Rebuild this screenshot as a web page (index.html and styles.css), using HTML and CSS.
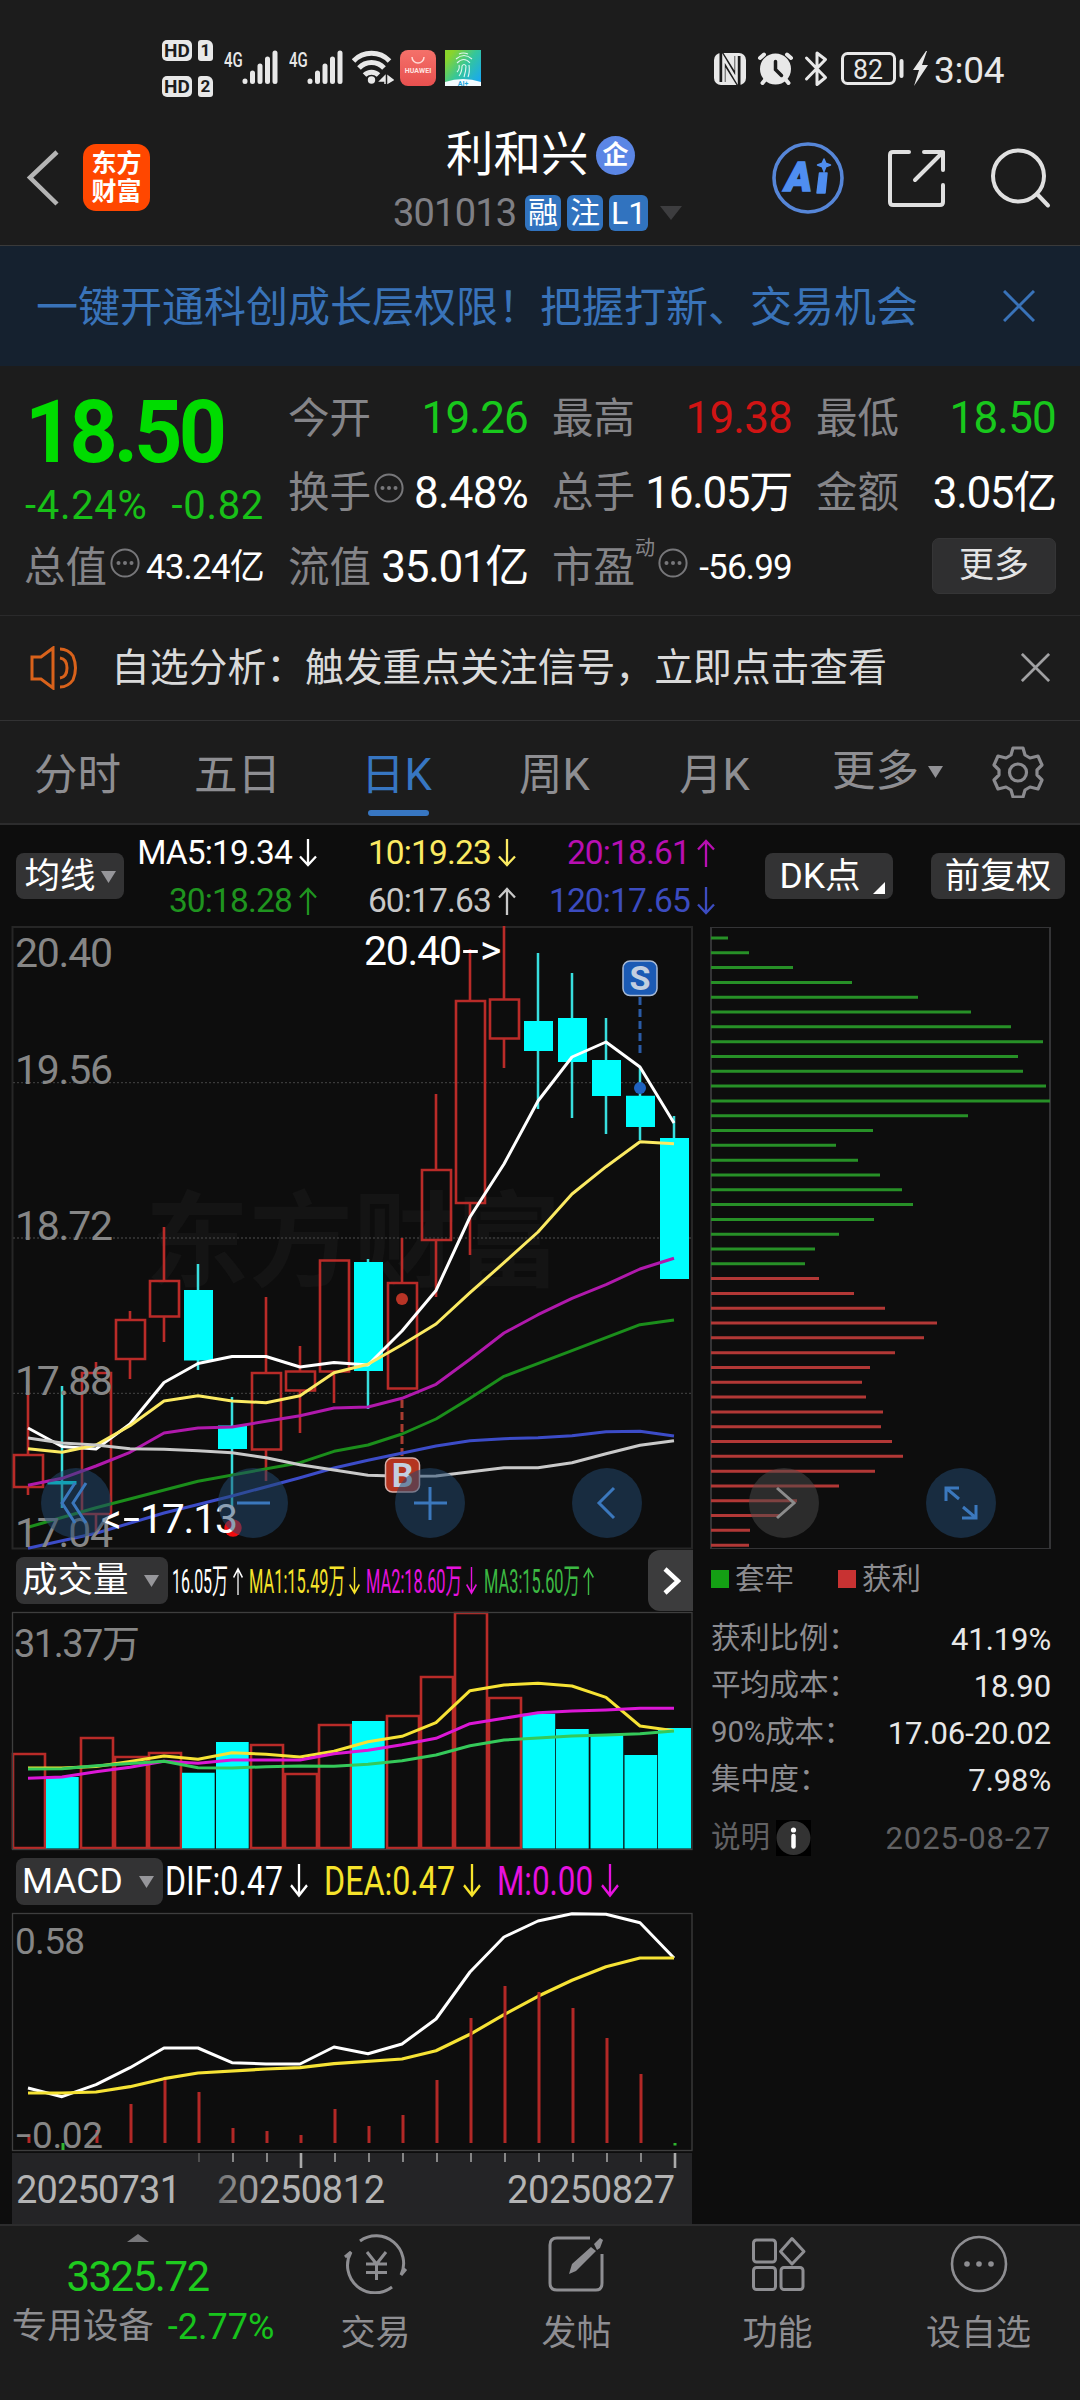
FILE: index.html
```html
<!DOCTYPE html>
<html lang="zh-CN">
<head>
<meta charset="utf-8">
<title>利和兴 301013</title>
<link rel="stylesheet" href="styles.css">
</head>
<body>
<svg class="defs" aria-hidden="true">
  <symbol id="down" viewBox="0 0 18 28" preserveAspectRatio="none"><path d="M9 0v26M1 17.500l8 8.500 8-8.500" fill="none" stroke="currentColor" stroke-width="2.300"/></symbol>
  <symbol id="up" viewBox="0 0 18 28" preserveAspectRatio="none"><path d="M9 28V2M1 10.500L9 2l8 8.500" fill="none" stroke="currentColor" stroke-width="2.300"/></symbol>
  <symbol id="dots" viewBox="0 0 30 30"><circle cx="15" cy="15" r="13.600" fill="none" stroke="currentColor" stroke-width="2"/><g fill="currentColor"><circle cx="8.500" cy="15" r="2"/><circle cx="15" cy="15" r="2"/><circle cx="21.500" cy="15" r="2"/></g></symbol>
  <symbol id="close" viewBox="0 0 32 32"><path d="M1 1l30 30M31 1L1 31" fill="none" stroke="currentColor" stroke-width="3"/></symbol>
  <symbol id="signal" viewBox="0 0 36 34"><g stroke="#e8e8e8" stroke-width="5" stroke-linecap="round"><path d="M3 31v.500M10.500 23v8.500M18 16v15.500M25.500 9v22.500M33 3v28.500"/></g></symbol>
</svg>

<header class="top">
  <div class="status">
    <div class="sims">
      <div class="sim"><b class="hd">HD</b><b class="no">1</b></div>
      <div class="sim"><b class="hd">HD</b><b class="no">2</b></div>
    </div>
    <div class="net"><span>4G</span><svg width="36" height="34"><use href="#signal"/></svg></div>
    <div class="net"><span>4G</span><svg width="36" height="34"><use href="#signal"/></svg></div>
    <svg class="wifi" width="42" height="36" viewBox="0 0 42 36">
      <g fill="none" stroke="#e8e8e8" stroke-width="5"><path d="M1.500 11a25 25 0 0 1 36 0"/><path d="M7 18a17 17 0 0 1 25 0"/><path d="M12.500 25a10 10 0 0 1 14 0"/></g>
      <circle cx="19.500" cy="30" r="3.700" fill="#e8e8e8"/>
      <path d="M28 31h5v-5zm5-5v8M36 26v8M36 26l5 4-5 3z" fill="#e8e8e8" stroke="#e8e8e8" stroke-width="1.500"/>
    </svg>
    <div class="huawei"><svg width="14" height="7" viewBox="0 0 14 7"><path d="M1 0a6 6 0 0 0 12 0" fill="none" stroke="#ffd9d5" stroke-width="1.500"/></svg><span>HUAWEI</span></div>
    <svg class="finger" width="36" height="36" viewBox="0 0 36 36">
      <defs><linearGradient id="fg" x1="0" y1="0" x2="1" y2=".8"><stop offset=".15" stop-color="#8ad42c"/><stop offset=".55" stop-color="#35c69a"/><stop offset="1" stop-color="#19a9f0"/></linearGradient></defs>
      <path d="M0 0h36v36H0z" fill="url(#fg)"/>
      <path d="M0 36v-4q18-6 36 0v4z" fill="#f4fbff"/>
      <g fill="none" stroke="#dff6ef" stroke-width="1.100"><path d="M14 4q4-2 9 0M11 9q8-7 16 0M12 13q7-7 13 0M14 26q3-4 3-10 2-3 4 0 0 5-2 11M12 22q3-3 2-7M24 15q1 7-1 12"/></g>
      <text x="18" y="35.500" text-anchor="middle" class="finger-text">AI+</text>
    </svg>
    <svg class="right-icons" width="228" height="40" viewBox="712 48 228 40">
      <rect x="714" y="53" width="32" height="32" rx="7" fill="#e8e8e8"/>
      <path d="M722.500 82V57l15 24V56" fill="none" stroke="#1c1c1c" stroke-width="6"/><path d="M723.500 82V58l13 22V56" fill="none" stroke="#e8e8e8" stroke-width="2.600"/>
      <g stroke="#e8e8e8" stroke-width="4" stroke-linecap="round"><path d="M760 58l4-3.500M791 58l-4-3.500M765 80l-2.500 3M786 80l2.500 3"/></g>
      <circle cx="775.500" cy="69" r="15.500" fill="#e8e8e8"/>
      <path d="M775.500 61.500v8l6 6" fill="none" stroke="#1c1c1c" stroke-width="3.500" stroke-linecap="round"/>
      <path d="M806.500 58l19 19.500-8.500 7V53l8.500 6.500-19 19.500" fill="none" stroke="#e8e8e8" stroke-width="3" stroke-linejoin="round" stroke-linecap="round"/>
      <rect x="842.500" y="53.500" width="52" height="30" rx="5" fill="none" stroke="#e8e8e8" stroke-width="3"/>
      <path d="M901.500 61v15" stroke="#e8e8e8" stroke-width="4" stroke-linecap="round"/>
      <path d="M926 51l-13 19h6l-5 16 14-21h-6l5-14z" fill="#e8e8e8"/>
      <text x="853" y="79" textLength="30" lengthAdjust="spacingAndGlyphs" class="battery">82</text>
    </svg>
    <span class="clock">3:04</span>
  </div>
  <div class="nav">
    <svg class="back" width="36" height="56" viewBox="0 0 36 56"><path d="M32 2L5 27.500 32 54" fill="none" stroke="#b4b4b4" stroke-width="4.500"/></svg>
    <div class="brand">东方<br>财富</div>
    <div class="title">
      <div class="name"><h1>利和兴</h1><span class="qi">企</span></div>
      <div class="code"><span class="num">301013</span><i>融</i><i>注</i><i class="l1">L1</i><svg width="22" height="14"><path d="M0 0h22L11 14z" fill="#3d3d3f"/></svg></div>
    </div>
    <svg class="actions" width="300" height="74" viewBox="771 141 300 74">
      <circle cx="808" cy="178" r="34" fill="none" stroke="#5686d8" stroke-width="3.600"/>
      <text x="785" y="191" class="ai">A</text>
      <path d="M819.500 173h7.500l-2 20h-8zM824 159l1.800 4.200 4.700 1.800-4.700 1.800-1.800 4.700-1.800-4.700-4.700-1.800 4.700-1.800z" fill="#4f8ef0" stroke="#4f8ef0" stroke-width="1.500" stroke-linejoin="round"/>
      <g fill="none" stroke="#e0e0e0" stroke-width="4" stroke-linecap="round" stroke-linejoin="round"><path d="M909 152h-16q-3 0-3 3v47q0 3 3 3h47q3 0 3-3v-17M924 152h19v18M943 152l-28 28"/><circle cx="1018.500" cy="176" r="25.500"/><path d="M1037 194l11 11.500"/></g>
    </svg>
  </div>
</header>

<section class="banner"><span>一键开通科创成长层权限！把握打新、交易机会</span><svg width="32" height="32"><use href="#close"/></svg></section>

<section class="quote">
  <div class="price">
    <strong>18.50</strong>
    <div class="change"><span>-4.24%</span><span>-0.82</span></div>
  </div>
  <div class="cell"><label>今开</label><span class="g">19.26</span></div>
  <div class="cell"><label>最高</label><span class="r">19.38</span></div>
  <div class="cell"><label>最低</label><span class="g">18.50</span></div>
  <div class="cell"><label>换手</label><svg class="info" width="30" height="30"><use href="#dots"/></svg><span>8.48%</span></div>
  <div class="cell"><label>总手</label><span class="wide">16.05万</span></div>
  <div class="cell"><label>金额</label><span class="wide">3.05亿</span></div>
  <div class="cell"><label>总值</label><svg class="info" width="30" height="30"><use href="#dots"/></svg><span class="small">43.24亿</span></div>
  <div class="cell"><label>流值</label><span class="wide">35.01亿</span></div>
  <div class="cell"><label>市盈</label><em>动</em><svg class="info" width="30" height="30"><use href="#dots"/></svg><span class="small">-56.99</span></div>
  <div class="cell end"><button>更多</button></div>
</section>

<section class="notice">
  <svg width="50" height="44" viewBox="0 0 50 44"><g fill="none" stroke="#d9621b" stroke-width="3"><path d="M2 11h9L23 2v40L11 33H2z"/><path d="M30 3q8 0 13 7 5 12 0 24-5 7-13 7M30 12q7 1 7 10t-7 10"/></g></svg>
  <span>自选分析：触发重点关注信号，立即点击查看</span>
  <svg class="x" width="29" height="29"><use href="#close"/></svg>
</section>

<nav class="tabs">
  <a>分时</a><a>五日</a><a class="on">日K</a><a>周K</a><a>月K</a>
  <a class="more">更多<svg width="15" height="12"><path d="M0 0h15L7.500 12z" fill="#929296"/></svg></a>
  <svg class="gear" width="52" height="52" viewBox="0 0 52 52"><g fill="none" stroke="#8b8b8f" stroke-width="3.200" stroke-linejoin="round"><path d="M21 2h10l2 7 5 3 8-2 4 9-5 5v5l5 5-4 9-8-2-5 3-2 7H21l-2-7-5-3-8 2-4-9 5-5v-5l-5-5 4-9 8 2 5-3z"/><circle cx="26" cy="26.500" r="8.500"/></g></svg>
</nav>

<main class="chart">
  <div class="tools">
    <button class="ma">均线<svg width="15" height="12"><path d="M0 0h15L7.500 12z" fill="#96969a"/></svg></button>
    <div class="averages">
      <span class="white">MA5:19.34<svg><use href="#down"/></svg></span><span class="yellow">10:19.23<svg><use href="#down"/></svg></span><span class="purple">20:18.61<svg><use href="#up"/></svg></span>
      <span class="green">30:18.28<svg><use href="#up"/></svg></span><span class="grey">60:17.63<svg><use href="#up"/></svg></span><span class="blue">120:17.65<svg><use href="#down"/></svg></span>
    </div>
    <button class="dk">DK点<svg width="12" height="12"><path d="M12 0v12H0z" fill="#fff"/></svg></button>
    <button class="fq">前复权</button>
  </div>

  <div class="panes">
    <div class="left">
      <svg width="700" height="624" viewBox="0 926 700 624">
        <text x="145" y="1279" class="watermark" textLength="416">东方财富</text>
        <rect x="12.500" y="927" width="679.500" height="621.500" fill="none" stroke="#262626" stroke-width="2"/>
        <path d="M13 1082.700h679M13 1238h679M13 1393.400h679" stroke="#3a3a3a" stroke-width="1.300" stroke-dasharray="2 2"/>
        <g fill="none" stroke="#b92b28" stroke-width="2.600">
          <path d="M28 1385v69M28 1487v8M96 1362v10M96 1514v19M130 1311v8M130 1359v20M164 1227v53M164 1316v26M266 1297v75M266 1449v32M300 1346v25M300 1390v43M334 1372v31M402 1238v44M436 1094v75M436 1240v57M470 949v52M470 1203v52M504 926v73M504 1038v30"/>
          <path d="M14 1455h29v32H14zM82 1373h29v141H82zM116 1320h29v39h-29zM150 1281h29v35.500h-29zM252 1373h29v76.500h-29zM286 1371.500h29v19h-29zM320 1260.500h29v111h-29zM388 1283h29v105.500h-29zM422 1170h29v70h-29zM456 1001h29v202h-29zM490 999.500h29v39h-29z"/>
        </g>
        <path d="M62 1386v122M198 1264v106M232 1397v113M368 1259v150M538 953v156M572 973v145M606 1018v116M640 1067v73M674 1116v30" stroke="#38dede" stroke-width="2.500"/>
        <path d="M47.500 1481h29v3.500h-29zM184 1290h29v70.500h-29zM218 1425.500h29V1449h-29zM354 1262h29v109h-29zM524 1021h29v30h-29zM558 1018h29v44h-29zM592 1060h29v36h-29zM626 1095.700h29v31.300h-29zM660 1138h29v141h-29z" fill="#00fefe"/>
        <path d="M640 997v56" stroke="#2a5ba5" stroke-width="3" stroke-dasharray="8 4"/>
        <path d="M402 1400v58" stroke="#a83c30" stroke-width="3" stroke-dasharray="8 4"/>
        <g fill="none" stroke-width="3" stroke-linejoin="round">
          <polyline stroke="#fff" points="28,1428 62,1446.500 96,1449 130,1424 164,1382.500 198,1363.500 232,1356.500 266,1356.500 300,1367 334,1362.500 368,1365 402,1331 436,1290.500 470,1217 504,1164 538,1101 572,1057 606,1042 640,1067 674,1123"/>
          <polyline stroke="#fbea62" points="28,1448.700 62,1452.300 96,1445 130,1425.700 164,1401 198,1395.700 232,1401 266,1402.700 300,1395.700 334,1372.700 368,1364.300 402,1344.700 436,1324 470,1292.700 504,1262.700 538,1232 572,1194 606,1166.700 640,1141.700 674,1143.700"/>
          <polyline stroke="#b019ac" points="28,1485.300 62,1478.300 96,1466 130,1452.300 164,1433 198,1428 232,1427 266,1421.300 300,1415.700 334,1408 368,1407 402,1398.300 436,1384.300 470,1359.300 504,1333 538,1314.700 572,1298.300 606,1284.700 640,1269 674,1258.300"/>
          <polyline stroke="#1b8e1b" points="28,1527.300 96,1507.700 198,1481.300 300,1462.700 334,1451.300 368,1445 402,1434 436,1419 470,1398.300 504,1376.300 572,1350.700 640,1324.700 674,1320"/>
          <polyline stroke="#3c4cc8" points="28,1548.300 96,1533.300 164,1513 232,1496 300,1477.700 334,1468 368,1460.300 436,1446 470,1440.700 504,1438.700 538,1437.700 572,1435.700 606,1431.700 640,1431.300 674,1436"/>
          <polyline stroke="#c9c9c9" points="28,1438 62,1443 96,1445 130,1448.700 164,1449.300 198,1450.700 232,1452.700 266,1457.700 300,1464.700 334,1470 368,1475.300 402,1476.300 436,1476 504,1467.700 538,1467.700 572,1462.700 606,1453.700 640,1445.300 674,1440.700"/>
        </g>
        <circle cx="640" cy="1088" r="6" fill="#1f62c0"/>
        <circle cx="402" cy="1299" r="6" fill="#b83426"/>
        <circle cx="233" cy="1528" r="8.700" fill="#f00c10"/>
        <rect x="623" y="961" width="34" height="34.500" rx="7" fill="#1b5ab4" stroke="#a9bbd6" stroke-width="1.500"/>
        <text x="640" y="990" class="mark">S</text>
        <rect x="385.500" y="1458" width="34" height="34" rx="7" fill="#b4341f" stroke="#d7b0ab" stroke-width="1.500"/>
        <text x="402.500" y="1487" class="mark">B</text>
        <g class="axis">
          <text x="15" y="966.500" textLength="98">20.40</text><text x="15" y="1084" textLength="98">19.56</text><text x="15" y="1239.500" textLength="98">18.72</text><text x="15" y="1394.500" textLength="98">17.88</text><text x="15" y="1546.500" textLength="98">17.04</text>
        </g>
        <g class="peak"><text x="364" y="964.500" textLength="98">20.40</text><text x="462" y="964" textLength="17" lengthAdjust="spacingAndGlyphs">-</text><text x="480" y="964">&gt;</text><text x="101" y="1532.500">&lt;</text><text x="123" y="1532" textLength="17" lengthAdjust="spacingAndGlyphs">-</text><text x="140" y="1532.500" textLength="98">17.13</text></g>
      </svg>

      <div class="sub">
        <button class="vol">成交量<svg width="15" height="12"><path d="M0 0h15L7.500 12z" fill="#96969a"/></svg></button>
        <svg width="470" height="62" viewBox="170 1550 470 62" class="vol-values">
          <g class="white"><text x="172" y="1593" textLength="56" lengthAdjust="spacingAndGlyphs">16.05万</text><use href="#up" x="233" y="1567" width="10" height="28"/></g>
          <g class="vyellow"><text x="249" y="1593" textLength="96" lengthAdjust="spacingAndGlyphs">MA1:15.49万</text><use href="#down" x="349" y="1567" width="11" height="28"/></g>
          <g class="vpink"><text x="366" y="1593" textLength="96" lengthAdjust="spacingAndGlyphs">MA2:18.60万</text><use href="#down" x="466" y="1567" width="11" height="28"/></g>
          <g class="vgreen"><text x="484" y="1593" textLength="96" lengthAdjust="spacingAndGlyphs">MA3:15.60万</text><use href="#up" x="583" y="1567" width="11" height="28"/></g>
        </svg>
        <div class="next"><svg width="18" height="28" viewBox="0 0 18 28"><path d="M2 2l13 12L2 26" fill="none" stroke="#fff" stroke-width="4.500"/></svg></div>
      </div>

      <svg width="700" height="240" viewBox="0 1611 700 240">
        <g fill="none" stroke="#b92b28" stroke-width="2.600"><path d="M13 1754h32v94H13zM81 1738h32v110H81zM115 1757h32v91h-32zM149 1753h32v95h-32zM251 1745h32v103h-32zM285 1774h32v74h-32zM319 1725h32v123h-32zM387 1716h32v132h-32zM421 1677h32v171h-32zM455 1613h32v235h-32zM489 1698h32v150h-32z"/></g>
        <path d="M46 1777h32.700v71.500H46zM182 1772.700h32.700v75.800H182zM216 1742h32.700v106.500H216zM352 1721h32.700v127.500H352zM522.500 1713.700h32.700v134.800h-32.700zM556 1729h32.700v119.500H556zM590.500 1735h32.700v113.500h-32.700zM624.500 1755h32.700v93.500h-32.700zM658 1728h33v120.500h-33z" fill="#00fefe"/>
        <rect x="12.500" y="1612.500" width="679.500" height="237" fill="none" stroke="#3e3e3e" stroke-width="1.300"/>
        <g fill="none" stroke-width="3" stroke-linejoin="round">
          <polyline stroke="#f6e335" points="28,1768 62,1768 96,1766.500 130,1761.500 164,1756 198,1759.300 232,1752.700 266,1754.300 300,1757 334,1751.300 368,1741.700 402,1736.300 436,1722.700 470,1690.700 504,1685 538,1683.300 572,1686 606,1697.300 640,1726 674,1730.700"/>
          <polyline stroke="#dc17d6" points="28,1778.300 62,1777 96,1771.700 130,1767.300 164,1761.300 198,1763.300 232,1760 300,1760 334,1753.700 368,1750.300 402,1744.700 436,1738.300 470,1723.700 504,1718.300 538,1712.700 572,1711 606,1710 640,1708.300 674,1708.300"/>
          <polyline stroke="#35c95a" points="28,1769 62,1768.700 96,1765.700 164,1761.300 198,1767.700 232,1768 266,1766.700 300,1766 334,1766.300 368,1764.300 402,1760.700 436,1755 470,1745.700 504,1740 538,1738 572,1736 606,1735 640,1733.700 674,1731"/>
        </g>
        <text x="14" y="1656.500" class="axis s38" textLength="126">31.37万</text>
      </svg>

      <div class="sub macd">
        <button class="vol">MACD<svg width="15" height="12"><path d="M0 0h15L7.500 12z" fill="#96969a"/></svg></button>
        <svg width="470" height="62" viewBox="165 1851 470 62" class="macd-values">
          <g class="white"><text x="165" y="1895" textLength="118" lengthAdjust="spacingAndGlyphs">DIF:0.47</text><use href="#down" x="290" y="1864" width="18" height="34"/></g>
          <g class="vyellow"><text x="324" y="1895" textLength="131" lengthAdjust="spacingAndGlyphs">DEA:0.47</text><use href="#down" x="463" y="1864" width="18" height="34"/></g>
          <g class="vpink"><text x="497" y="1895" textLength="96" lengthAdjust="spacingAndGlyphs">M:0.00</text><use href="#down" x="601" y="1864" width="18" height="34"/></g>
        </svg>
      </div>

      <svg width="700" height="312" viewBox="0 1912 700 312">
        <defs>
          <linearGradient id="shade" gradientUnits="userSpaceOnUse" x1="185" y1="0" x2="270" y2="0"><stop offset="0" stop-color="#242426" stop-opacity=".75"/><stop offset="1" stop-color="#242426" stop-opacity="0"/></linearGradient>
        </defs>
        <rect x="12.500" y="1913.500" width="679.500" height="237" fill="none" stroke="#3e3e3e" stroke-width="1.300"/>
        <polyline fill="none" stroke="#fff" stroke-width="3" stroke-linejoin="round" points="28,2088 62,2096.700 96,2084.700 130,2067.700 164,2048 198,2048 232,2062.700 266,2064 300,2064 334,2047 368,2053.700 402,2044 436,2019 470,1972 504,1937 538,1921 572,1913.800 606,1914.300 640,1922.700 674,1958"/>
        <polyline fill="none" stroke="#f6e335" stroke-width="3.200" stroke-linejoin="round" points="28,2093 62,2093 96,2092 130,2086.700 164,2078.700 198,2073 266,2069 300,2067.700 334,2063.700 402,2059 436,2050.700 470,2034.300 504,2014.700 538,1996.300 572,1980.300 606,1966.700 640,1958 674,1958"/>
        <path d="M29 2143v-9M97 2143v-13M131 2143v-39M165 2143v-63M199 2143v-51M233 2143v-15M267 2143v-12M301 2143v-8M335 2143v-34M369 2143v-17M403 2143v-28M437 2143v-63M471 2143v-125M505 2143v-157M539 2143v-151M573 2143v-135M607 2143v-105M641 2143v-69" stroke="#b22826" stroke-width="3"/>
        <path d="M63 2143v7M675 2143v2.500" stroke="#2fb52f" stroke-width="3"/>
        <g class="axis s37"><text x="15" y="1953.500" textLength="70">0.58</text><text x="16" y="2147" textLength="15" lengthAdjust="spacingAndGlyphs">-</text><text x="32" y="2147.500" textLength="71">0.02</text></g>
        <path d="M12 2153h680v71H12z" fill="#242426"/>
        <path d="M199 2153v9" stroke="#555" stroke-width="1.800"/>
        <path d="M233 2153v9M267 2153v9M335 2153v9M369 2153v9M403 2153v9M437 2153v9M471 2153v9M505 2153v9M539 2153v9M573 2153v9M607 2153v9M641 2153v9" stroke="#929292" stroke-width="1.800"/>
        <path d="M301 2153v15M675 2153v15" stroke="#aaa" stroke-width="2.600"/>
        <g class="dates"><text x="217" y="2202.500" textLength="168">20250812</text><path d="M185 2170h85v45H185z" fill="url(#shade)"/><text x="16" y="2202.500" textLength="165">20250731</text><text x="507" y="2202.500" textLength="168">20250827</text></g>
      </svg>
    </div>

    <aside class="right">
      <svg width="342" height="624" viewBox="710 926 342 624">
        <path d="M710 927.500h341M710 1548.500h341" stroke="#343436" stroke-width="1.200"/>
        <path d="M711 927v622M1050 927v622" stroke="#343436" stroke-width="2"/>
        <path stroke="#279027" stroke-width="3" d="M711 938h17m-17 14.810h38m-38 14.810h82m-82 14.810h141m-141 14.810h207m-207 14.810h260m-260 14.810h300m-300 14.810h332m-332 14.810h307m-307 14.810h312m-312 14.810h335m-335 14.810h339m-339 14.810h257m-257 14.810h162m-162 14.810h125m-125 14.810h147m-147 14.810h169m-169 14.810h191m-191 14.810h202m-202 14.810h163m-163 14.810h128m-128 14.810h104m-104 14.810h94"/>
        <path stroke="#b23836" stroke-width="3" d="M711 1278.600h108m-108 14.810h143m-143 14.810h174m-174 14.810h226m-226 14.810h213m-213 14.810h184m-184 14.810h159m-159 14.810h151m-151 14.810h155m-155 14.810h172m-172 14.810h170m-170 14.810h181m-181 14.810h192m-192 14.810h164m-164 14.810h128m-128 14.810h86m-86 14.810h69m-69 14.810h39m-39 14.810h38"/>
      </svg>
      <div class="legend"><i class="sq-green"></i><span>套牢</span><i class="sq-red"></i><span>获利</span></div>
      <dl>
        <div><dt>获利比例：</dt><dd>41.19%</dd></div>
        <div><dt>平均成本：</dt><dd>18.90</dd></div>
        <div><dt>90%成本：</dt><dd>17.06-20.02</dd></div>
        <div><dt>集中度：</dt><dd>7.98%</dd></div>
      </dl>
      <div class="explain"><span>说明</span><svg width="35" height="36" viewBox="0 0 35 36"><path d="M0 0h35v36H0z" fill="#000"/><circle cx="17.500" cy="18" r="17" fill="#333"/><circle cx="17.500" cy="10" r="2.600" fill="#fff"/><path d="M17.500 16v10.500" stroke="#fff" stroke-width="4.500" stroke-linecap="round"/></svg><time>2025-08-27</time></div>
    </aside>

    <div class="controls">
      <svg viewBox="-35 -35 70 70"><path d="M-1-20l-13 20 13 20M10-20L-3 0l13 20"/></svg>
      <svg viewBox="-35 -35 70 70"><path d="M-16 0h33"/></svg>
      <svg viewBox="-35 -35 70 70"><path d="M-16 0h33M0-16v33"/></svg>
      <svg viewBox="-35 -35 70 70"><path d="M7-15L-8 0 7 15"/></svg>
      <svg class="off" viewBox="-35 -35 70 70"><path d="M-7-15L10 0-7 15"/></svg>
      <svg viewBox="-35 -35 70 70"><path d="M-2-15h-13v13M-15-15l13 11M1 15h14V2M15 15L2 4"/></svg>
    </div>
  </div>
</main>

<footer>
  <div class="index">
    <svg width="22" height="8"><path d="M0 8h22L11 0z" fill="#77777a"/></svg>
    <strong>3325.72</strong>
    <div><span>专用设备</span><b>-2.77%</b></div>
  </div>
  <div class="item">
    <svg width="66" height="60" viewBox="0 0 66 60"><g fill="none" stroke="#8e8e92" stroke-width="3"><path d="M17 7A27.500 27.500 0 0 1 58 41l5-6M49 53A27.500 27.500 0 0 1 8 18l-6 5"/><path d="M24 18l9.500 12L43 18M33.500 30v16M23 30h21M23 38.500h21"/></g></svg>
    <span>交易</span>
  </div>
  <div class="item">
    <svg width="66" height="60" viewBox="0 0 66 60"><path d="M46 4H13q-7 0-7 7v38q0 7 7 7h39q6 0 6-7V20" fill="none" stroke="#8e8e92" stroke-width="3"/><path d="M25 40l3-10L47 13l5 4-20 20zM50 10l6-6 3 2-3 8-3 2z" fill="#8e8e92"/></svg>
    <span>发帖</span>
  </div>
  <div class="item">
    <svg width="66" height="60" viewBox="0 0 66 60"><g fill="none" stroke="#8e8e92" stroke-width="3"><rect x="8.500" y="6" width="22" height="22" rx="3"/><rect x="8.500" y="33.500" width="22" height="22" rx="3"/><rect x="36" y="33.500" width="22" height="22" rx="3"/><path d="M47 4.500L59 17.500 47 30 35.500 17.500z" stroke-linejoin="round"/></g></svg>
    <span>功能</span>
  </div>
  <div class="item">
    <svg width="66" height="60" viewBox="0 0 66 60"><circle cx="33" cy="30" r="27" fill="none" stroke="#8e8e92" stroke-width="2.600"/><g fill="#8e8e92"><circle cx="21" cy="30" r="2.800"/><circle cx="33" cy="30" r="2.800"/><circle cx="45" cy="30" r="2.800"/></g></svg>
    <span>设自选</span>
  </div>
</footer>
</body>
</html>
```
FILE: styles.css
```css
* { box-sizing: border-box; margin: 0; padding: 0; }
body {
  width: 1080px;
  height: 2400px;
  overflow: hidden;
  background: #1c1c1c;
  color: #fff;
  font-family: Roboto, "Noto Sans CJK SC", sans-serif;
  line-height: 1;
}
svg { display: block; flex: none; }
.defs { width: 0; height: 0; overflow: hidden; }
button { border: 0; font: inherit; color: inherit; background: #333334; }
i, em { font-style: normal; }
span, label, a, b, strong, button { white-space: nowrap; }

/* header */
.top { height: 246px; border-bottom: 1px solid #3a3a3a; }
.status { height: 132px; display: flex; align-items: flex-start; padding-left: 162px; color: #e8e8e8; }
.sims { display: flex; flex-direction: column; gap: 15px; margin-top: 40px; width: 62px; }
.sim { display: flex; gap: 6px; height: 21px; }
.sim b { background: #e8e8e8; color: #1c1c1c; text-align: center; line-height: 21px; }
.hd { width: 30px; border-radius: 5px; font-size: 19px; }
.no { width: 15px; border-radius: 3px 6px 3px 3px; font-size: 17px; }
.net { display: flex; width: 65px; margin-top: 50px; }
.net span { width: 18px; font-size: 20px; font-weight: 500; transform: scaleX(.75); transform-origin: left; }
.wifi { margin: 50px 0 0 -2px; }
.huawei { width: 36px; height: 36px; margin: 50px 0 0 6px; border-radius: 8px; background: linear-gradient(#f4716a, #e8504f); display: flex; flex-direction: column; align-items: center; padding-top: 7px; }
.huawei span { font-size: 7px; font-weight: 700; margin-top: 4px; color: #ffe4e0; letter-spacing: .1px; }
.finger { margin: 50px 0 0 9px; }
.finger-text { font-size: 7px; font-weight: 700; fill: #1ea5dc; }
.right-icons { margin: 48px 0 0 231px; }
.battery { font-size: 28px; fill: #e8e8e8; }
.clock { font-size: 37px; margin: 52px 0 0 -6px; letter-spacing: -.3px; }

.nav { height: 113px; display: flex; }
.back { margin: 18px 0 0 25px; }
.brand { width: 67px; height: 67px; margin: 12px 0 0 22px; border-radius: 13px; background: #ff4700; font-size: 25px; font-weight: 700; line-height: 28px; text-align: center; padding-top: 6px; }
.title { width: 440px; margin-left: 243px; }
.name { display: flex; align-items: center; height: 47px; padding-left: 53px; }
h1 { font-size: 47.500px; font-weight: 400; width: 146px; white-space: nowrap; }
.qi { width: 39px; height: 39px; margin-left: 4px; border-radius: 50%; background: #5b86e5; font-size: 26px; font-weight: 700; line-height: 38px; text-align: center; }
.code { display: flex; align-items: center; gap: 6px; height: 36px; margin-top: 16px; }
.code .num { font-size: 38px; color: #7f7f84; letter-spacing: -.8px; width: 126px; }
.code i { width: 36px; height: 36px; border-radius: 6px; background: #3173bf; font-size: 30px; line-height: 36px; text-align: center; }
.code i.l1 { width: 39px; font-size: 32px; }
.code svg { margin-left: 6px; }
.actions { margin: 9px 0 0 -62px; }
.ai { font-size: 41px; font-weight: 900; font-style: italic; fill: #4f8ef0; stroke: #4f8ef0; stroke-width: 1.5; }

.banner { height: 120px; background: #15212f; color: #3973b9; display: flex; align-items: center; justify-content: space-between; padding: 0 45px 0 36px; font-size: 42px; }
.banner span { padding-top: 4px; }

/* quote */
.quote { height: 250px; padding: 14px 24px 0 25px; display: grid; grid-template-columns: 239px 239px 239px 239px; grid-template-rows: 74.500px 74.500px 74.500px; column-gap: 25px; border-bottom: 1px solid #2a2a2b; }
.price { grid-row: span 2; color: #00dc00; }
.price strong { display: block; font-size: 88px; font-weight: 700; letter-spacing: -4px; margin: 8px 0 0 0; transform: scaleX(.955); transform-origin: left; }
.change { display: flex; justify-content: space-between; font-size: 40px; color: #18c018; margin-top: 10px; letter-spacing: .7px; }
.cell { display: flex; align-items: center; font-size: 44px; height: 75px; padding-top: 1px; }
.cell label { font-size: 41.500px; color: #858589; margin-left: -1px; padding-top: 1px; }
.cell span { margin-left: auto; letter-spacing: -.8px; }
.cell .wide { letter-spacing: -1.3px; }
.cell .g { color: #18c81c; }
.cell .r { color: #d01414; }
.cell .small { font-size: 35px; }
.info { color: #77777a; margin: -9px 0 0 3px; }
.cell em { font-size: 20px; color: #858589; margin-top: -38px; }
.end { justify-content: flex-end; }
.end button { width: 124px; height: 56px; border-radius: 7px; font-size: 35px; color: #e4e4e4; background: #2f2f30; border: 1px solid #353536; margin-top: -3px; }

.notice { height: 105px; display: flex; align-items: center; padding: 0 30px; font-size: 38.800px; color: #dadada; border-bottom: 1px solid #323233; }
.notice span { margin-left: 31px; padding-top: 1px; }
.notice .x { margin-left: auto; color: #a0a0a2; margin-top: -2px; }

.tabs { height: 104px; display: flex; align-items: center; padding-left: 34px; color: #8e8e92; font-size: 43.500px; border-bottom: 2px solid #2c2c2d; }
.tabs a { width: 160px; height: 100%; line-height: 110px; display: flex; }
.tabs a:nth-child(3) { margin-left: 7px; width: 158px; }
.tabs a.on { color: #3776c2; position: relative; }
.tabs .on::after { content: ""; position: absolute; left: 7px; bottom: 7px; width: 61px; height: 6px; border-radius: 3px; background: #3776c2; }
.tabs a.more { width: 110px; margin-left: -7px; align-items: center; }
.more svg { margin-left: 9px; }
.gear { margin-left: 50px; }

/* chart */
.chart { background: #0d0d0d; height: 1399px; }
.tools { height: 101px; display: flex; padding-left: 16px; }
.tools button { height: 46px; margin-top: 28px; border-radius: 8px; display: flex; align-items: center; justify-content: center; font-size: 35.500px; padding-top: 1px; }
.ma { width: 108px; gap: 5px; }
.averages { display: grid; grid-template-columns: 193px 199px 199px; grid-template-rows: 48px 48px; padding-top: 4px; font-size: 33.500px; letter-spacing: -.85px; }
.averages span { display: flex; align-items: center; justify-content: flex-end; }
.averages svg { width: 18px; height: 28px; margin-left: 7px; }
.dk { width: 128px; margin-left: 50px; }
.dk svg { margin: 22px -6px 0 12px; }
.fq { width: 134px; margin-left: 38px; }
.white { color: #fff; fill: #fff; }
.yellow { color: #fbea62; }
.purple { color: #b80fb2; }
.green { color: #1f941f; }
.grey { color: #c8c8c8; }
.blue { color: #3c4cc0; }
.vyellow { color: #f6e32b; fill: #f6e32b; }
.vpink { color: #e612de; fill: #e612de; }
.vgreen { color: #3cb943; fill: #3cb943; }

.panes { display: flex; position: relative; }
.left { width: 700px; }
.right { width: 380px; padding-left: 10px; }
.watermark { font-size: 104px; font-weight: 700; fill: #141414; }
.axis { font-size: 41px; fill: #868686; }
.s38 { font-size: 38px; }
.s37 { font-size: 37px; }
.peak { font-size: 41px; fill: #fff; }
.mark { font-size: 34px; font-weight: 700; fill: #c3cfe0; text-anchor: middle; }
.dates { font-size: 38px; fill: #b4b4b4; }

.sub { height: 61px; display: flex; padding-left: 16px; }
.vol { width: 152px; height: 47px; margin-top: 7px; border-radius: 8px; font-size: 35.500px; display: flex; align-items: center; justify-content: space-between; padding: 1px 9px 0 6px; }
.macd .vol { width: 147px; }
.vol-values { margin: 0 -30px 0 2px; font-size: 34px; overflow: visible; }
.macd-values { margin-left: 2px; font-size: 40px; overflow: visible; }
.next { width: 45px; height: 61px; margin-left: auto; margin-right: 7px; border-radius: 12px 0 0 12px; background: #3c3c3d; display: flex; align-items: center; justify-content: center; padding-left: 2px; }

.legend { display: flex; align-items: center; height: 30px; margin-top: 14px; font-size: 29.500px; color: #8c8c90; padding-left: 1px; }
.legend i { width: 18px; height: 18px; margin-right: 6px; }
.legend span { width: 103px; padding-top: 1px; }
.sq-green { background: #14a014; }
.sq-red { background: #c83232; }
dl { width: 341px; margin-top: 21px; }
dl div { display: flex; justify-content: space-between; align-items: center; height: 47px; }
dt { font-size: 29.500px; color: #8c8c90; padding: 1px 0 0 1px; letter-spacing: -.2px; }
dd { font-size: 31px; color: #e8e8e8; padding-top: 1px; letter-spacing: -.1px; }
.explain { display: flex; align-items: center; width: 341px; margin-top: 17px; font-size: 29.500px; color: #616163; padding-left: 1px; }
.explain svg { margin-left: 6px; }
.explain time { margin-left: auto; font-size: 31px; letter-spacing: .9px; padding-top: 1px; }

.controls { position: absolute; left: 41px; top: 542px; width: 955px; display: flex; justify-content: space-between; }
.controls svg { width: 70px; height: 70px; border-radius: 50%; background: rgba(35, 72, 112, .52); fill: none; stroke: #3b78bd; stroke-width: 3; }
.controls .off { background: rgba(75, 75, 75, .5); stroke: #8c8c8c; }

/* bottom bar */
footer { height: 176px; display: flex; background: #1c1c1c; border-top: 2px solid #2c2c2d; }
.index { width: 275px; display: flex; flex-direction: column; align-items: center; padding-top: 8px; }
.index strong { font-size: 42px; font-weight: 400; color: #1fcb1f; letter-spacing: -1.500px; margin-top: 14px; }
.index div { display: flex; align-items: center; gap: 14px; margin-top: 11px; height: 36px; padding-left: 11px; }
.index div span { font-size: 35.500px; color: #8e8e92; }
.index b { font-size: 36px; font-weight: 400; color: #18c41c; }
.item { width: 201px; display: flex; flex-direction: column; align-items: center; padding-top: 8px; font-size: 35px; color: #8e8e92; }
.item span { margin-top: 22px; }
```
